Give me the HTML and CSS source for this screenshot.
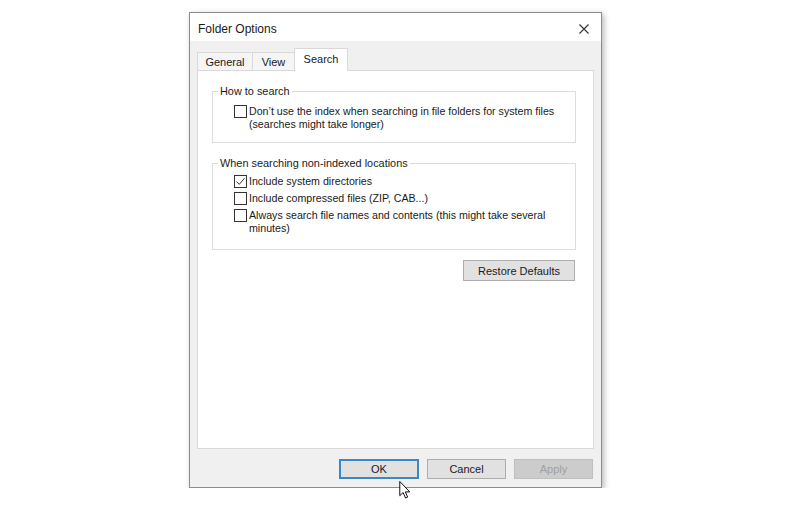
FILE: index.html
```html
<!DOCTYPE html>
<html>
<head>
<meta charset="utf-8">
<link rel="stylesheet" href="styles.css">
</head>
<body>
<div class="dialog">
  <div class="titlebar">
    <span class="title">Folder Options</span>
    <svg class="close" width="10" height="10" viewBox="0 0 10 10"><path d="M0.5 0.5 L9.5 9.5 M9.5 0.5 L0.5 9.5" stroke="#333" stroke-width="1.1" fill="none"/></svg>
  </div>
  <div class="body">
    <div class="tabs">
      <div class="tab t-general">General</div>
      <div class="tab t-view">View</div>
      <div class="tab t-search active">Search</div>
    </div>
    <div class="panel">
      <fieldset class="group g1">
        <legend>How to search</legend>
        <div class="opts">
          <div class="opt"><span class="cb"></span><span class="txt">Don’t use the index when searching in file folders for system files<br>(searches might take longer)</span></div>
        </div>
      </fieldset>
      <fieldset class="group g2">
        <legend>When searching non-indexed locations</legend>
        <div class="opts">
          <div class="opt"><span class="cb"><svg width="11" height="11" viewBox="0 0 11 11"><path d="M1.5 5.5 L4.2 8.4 L9.6 2.2" stroke="#333" stroke-width="1" fill="none"/></svg></span><span class="txt">Include system directories</span></div>
          <div class="opt"><span class="cb"></span><span class="txt">Include compressed files (ZIP, CAB...)</span></div>
          <div class="opt"><span class="cb"></span><span class="txt">Always search file names and contents (this might take several<br>minutes)</span></div>
        </div>
      </fieldset>
      <div class="restore-row"><button class="btn restore">Restore Defaults</button></div>
    </div>
    <div class="actions">
      <button class="btn ok">OK</button>
      <button class="btn">Cancel</button>
      <button class="btn disabled">Apply</button>
    </div>
  </div>
</div>
<svg class="cursor" width="12" height="18" viewBox="0 0 12 19"><path d="M0.5 0.5 L0.5 15.5 L4 12.2 L6.6 18 L8.8 17 L6.3 11.5 L11 11.5 Z" fill="#fff" stroke="#000" stroke-width="1" stroke-linejoin="round"/></svg>
</body>
</html>
```

FILE: styles.css
```css
* { box-sizing: border-box; }
body {
  margin: 0;
  padding: 12px 0 0 189px;
  background: #ffffff;
  font-family: "Liberation Sans", Arial, sans-serif;
  font-size: 11px;
  color: #151515;
}
.dialog {
  width: 413px;
  height: 476px;
  border: 1px solid #8c8c8c;
  background: #f0f0f0;
  box-shadow: 2px 2px 6px rgba(0, 0, 0, 0.28);
  display: flex;
  flex-direction: column;
}
.titlebar {
  height: 28px;
  background: #ffffff;
  display: flex;
  align-items: center;
  justify-content: space-between;
  padding: 3px 12px 0 8px;
}
.title { font-size: 12px; color: #1a1a1a; }
.close { display: block; }
.body {
  flex: 1;
  padding: 7px 7px 0 7px;
  display: flex;
  flex-direction: column;
}
.tabs {
  height: 22px;
  display: flex;
  align-items: flex-end;
}
.tab {
  height: 18px;
  border: 1px solid #d9d9d9;
  border-bottom: none;
  background: #f5f5f5;
  display: flex;
  align-items: center;
  justify-content: center;
  padding-top: 1px;
  color: #1a1a1a;
}
.t-general { width: 56px; }
.t-view { width: 43px; margin-left: -1px; }
.t-search { width: 54px; margin-left: -1px; }
.tab.active {
  height: 23px;
  background: #ffffff;
  margin-bottom: -1px;
  position: relative;
  z-index: 1;
  padding-top: 0;
  padding-bottom: 3px;
}
.panel {
  height: 379px;
  border: 1px solid #d9d9d9;
  background: #ffffff;
  padding: 14px 17px 0 14px;
}
.group {
  margin: 0;
  border: 1px solid #dcdcdc;
  padding: 7px 0 11px 5px;
  min-width: 0;
}
.group legend {
  padding: 0 2px;
  line-height: 13px;
  font-size: 10.9px;
  color: #1a1a1a;
}
.g2 {
  margin-top: 14px;
  padding-top: 5px;
  padding-bottom: 14px;
}
.opts {
  margin-left: 16px;
  display: flex;
  flex-direction: column;
  gap: 4px;
}
.opt {
  display: flex;
  align-items: flex-start;
  gap: 2px;
}
.cb {
  width: 13px;
  height: 13px;
  flex: none;
  border: 1px solid #333333;
  background: #ffffff;
  display: flex;
  align-items: center;
  justify-content: center;
}
.cb svg { display: block; }
.txt {
  line-height: 13px;
  font-size: 10.65px;
  white-space: nowrap;
  color: #1a1a1a;
}
.restore-row {
  margin-top: 10px;
  display: flex;
  justify-content: flex-end;
  padding-right: 1px;
}
.btn {
  font-family: "Liberation Sans", Arial, sans-serif;
  font-size: 11px;
  color: #1a1a1a;
  background: #e1e1e1;
  border: 1px solid #adadad;
  height: 20px;
  width: 79px;
  padding: 0;
  margin: 0;
}
.restore {
  width: 112px;
  height: 21px;
}
.actions {
  margin-top: 10px;
  display: flex;
  justify-content: flex-end;
  gap: 8px;
  padding-right: 1px;
}
.btn.ok {
  width: 80px;
  border: 2px solid #3d87c6;
}
.btn.disabled {
  background: #cccccc;
  border-color: #bfbfbf;
  color: #a0a0a0;
}
.cursor {
  position: absolute;
  left: 399px;
  top: 481px;
}
```
